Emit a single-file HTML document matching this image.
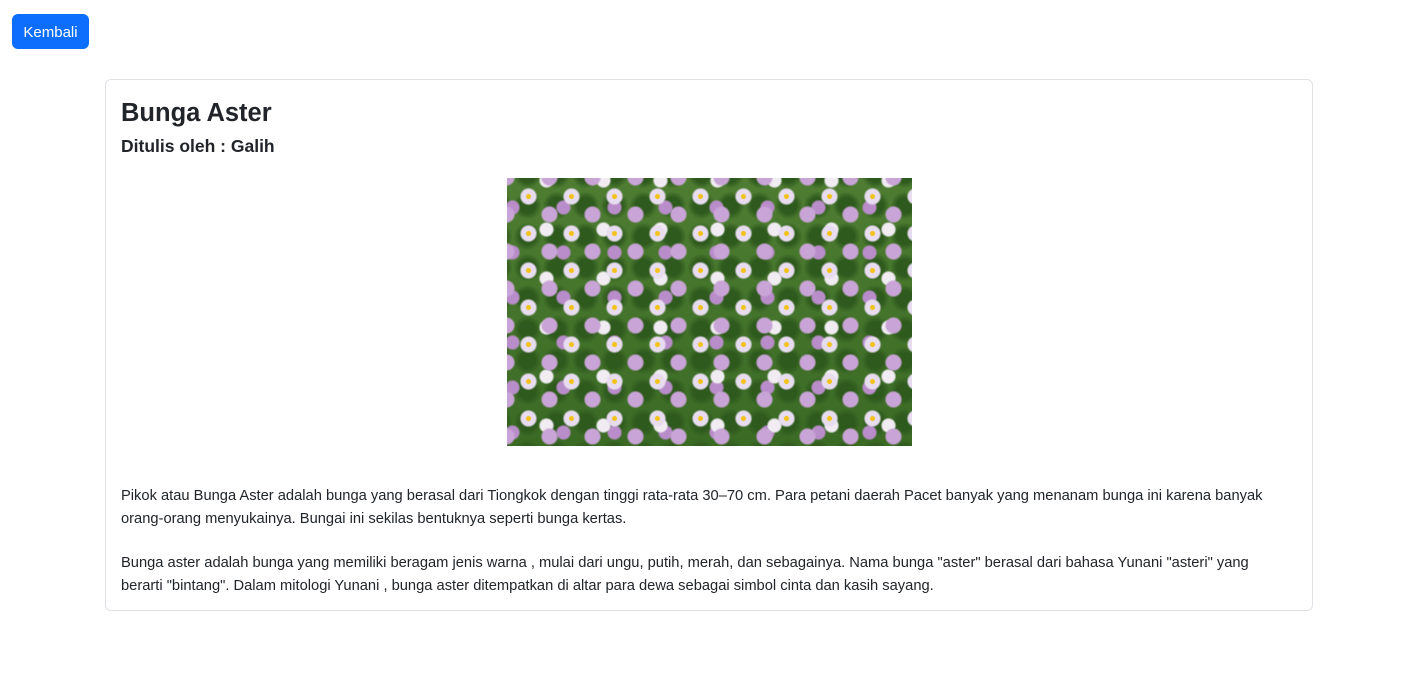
<!DOCTYPE html>
<html><head><meta charset="utf-8"><style>
body{margin:0;background:#fff;font-family:"Liberation Sans",sans-serif;color:#212529;width:1418px;height:686px;overflow:hidden;position:relative}
.btn{position:absolute;left:12px;top:14px;width:77px;height:35px;background:#0d6efd;color:#fff;border-radius:6px;font-size:15px;line-height:38px;text-align:center}
.card{position:absolute;left:105px;top:79px;width:1208px;height:532px;border:1px solid #dee2e6;border-radius:6px;box-sizing:border-box}
h1{position:absolute;left:15px;top:16px;margin:0;font-size:25.5px;font-weight:bold;line-height:34px}
h2{position:absolute;left:15px;top:54px;margin:0;font-size:17.5px;font-weight:bold;line-height:24px}
.img{position:absolute;left:401px;top:98px;width:405px;height:268px;
background:
radial-gradient(circle at 50% 50%,#f2c21a 0 2px,transparent 3px) 0 0/43px 37px,
radial-gradient(circle at 50% 50%,#e8ddf0 0 7px,transparent 9px) 0 0/43px 37px,
radial-gradient(circle at 50% 50%,#c9a4d6 0 7px,transparent 9px) 21px 18px/43px 37px,
radial-gradient(circle at 50% 50%,#f0ecf2 0 6px,transparent 8px) 11px 27px/57px 49px,
radial-gradient(circle at 50% 50%,#b98dca 0 6px,transparent 8px) 31px 7px/51px 45px,
radial-gradient(circle at 50% 50%,#2f5a1e 0 8px,transparent 14px) 6px 12px/29px 31px,
linear-gradient(#4e7d32,#3a6a24)}
p{position:absolute;left:15px;margin:0;font-size:14.7px;line-height:23px;width:1160px}
</style></head><body>
<div class="btn">Kembali</div>
<div class="card">
<h1>Bunga Aster</h1>
<h2>Ditulis oleh : Galih</h2>
<div class="img"></div>
<p style="top:405px">Pikok atau Bunga Aster adalah bunga yang berasal dari Tiongkok dengan tinggi rata-rata 30–70 cm. Para petani daerah Pacet banyak yang menanam bunga ini karena banyak orang-orang menyukainya. Bungai ini sekilas bentuknya seperti bunga kertas.</p>
<p style="top:472px">Bunga aster adalah bunga yang memiliki beragam jenis warna , mulai dari ungu, putih, merah, dan sebagainya. Nama bunga "aster" berasal dari bahasa Yunani "asteri" yang berarti "bintang". Dalam mitologi Yunani , bunga aster ditempatkan di altar para dewa sebagai simbol cinta dan kasih sayang.</p>
</div>
</body></html>
